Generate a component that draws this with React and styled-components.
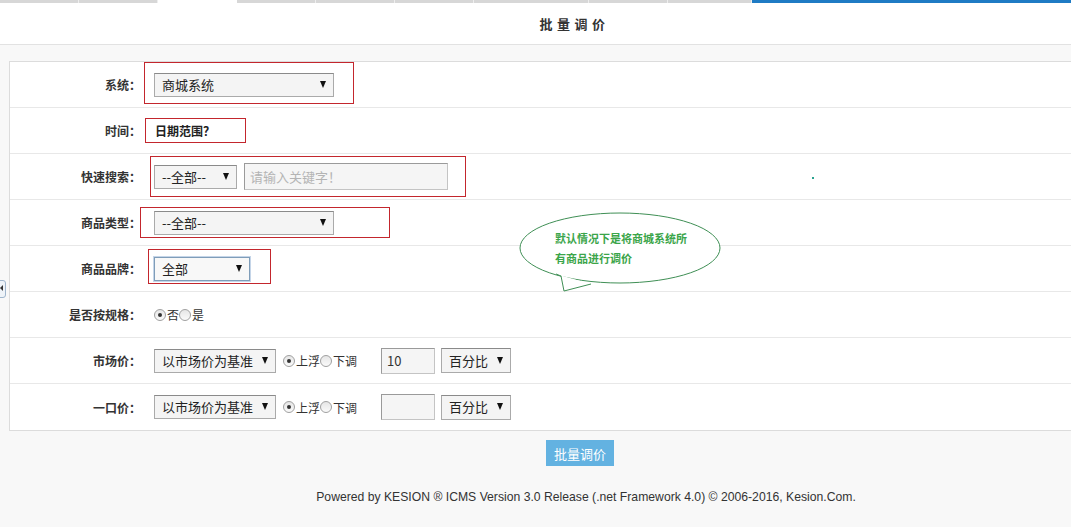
import React from "react";
import styled, { createGlobalStyle } from "styled-components";

const GlobalStyle = createGlobalStyle`
  body {
    margin: 0;
    background: #f8f8f8;
    font-family: "Noto Sans CJK SC", "Liberation Sans", sans-serif;
    font-size: 12px;
    color: #333;
  }
`;

const Page = styled.div`
  position: relative;
  width: 1071px;
  height: 527px;
  overflow: hidden;
`;

const TabStrip = styled.div`
  display: flex;
  height: 3px;
  background: #fff;
`;

const TabSeg = styled.div`
  box-sizing: border-box;
  width: ${(p) => (p.$w ? p.$w + "px" : "auto")};
  flex: ${(p) => (p.$w ? "none" : "1")};
  background: ${(p) => p.$bg};
  border-right: ${(p) => (p.$bg === "#d7d7d7" ? "1px solid #eee" : "none")};
`;

const Header = styled.div`
  height: 41px;
  background: #fff;
  border-bottom: 1px solid #e2e2e2;
  display: flex;
  align-items: center;
  justify-content: center;
  padding-left: 78px;
`;

const Title = styled.h1`
  margin: 0;
  font-size: 13px;
  font-weight: bold;
  letter-spacing: 4.5px;
  color: #333;
`;

const FormBox = styled.div`
  position: relative;
  margin: 16px 0 0 9px;
  width: 1075px;
  background: #fff;
  border: 1px solid #dcdcdc;
`;

const Row = styled.div`
  display: flex;
  align-items: center;
  height: ${(p) => p.$h || 45}px;
  border-bottom: ${(p) => (p.$last ? "none" : "1px solid #e8e8e8")};
`;

const Label = styled.div`
  width: 131px;
  text-align: right;
  font-weight: bold;
  font-size: 12px;
  color: #333;
  flex: none;
`;

const Value = styled.div`
  display: flex;
  align-items: center;
  padding-left: ${(p) => p.$pl || 0}px;
`;

const RedBox = styled.div`
  display: flex;
  align-items: center;
  gap: ${(p) => p.$gap || 0}px;
  border: 1px solid #c3262d;
  margin: ${(p) => p.$m || "0"};
  padding: ${(p) => p.$p || "0"};
  width: ${(p) => (p.$w ? p.$w + "px" : "auto")};
  height: ${(p) => (p.$h ? p.$h + "px" : "auto")};
  box-sizing: border-box;
`;

const Select = styled.div`
  display: flex;
  align-items: center;
  justify-content: space-between;
  box-sizing: border-box;
  width: ${(p) => p.$w}px;
  height: ${(p) => p.$h || 24}px;
  padding: 0 7px 1px 7px;
  border: 1px solid ${(p) => (p.$focus ? "#7f9db9" : "#aaa")};
  border-top-color: ${(p) => (p.$focus ? "#7f9db9" : "#8a8a8a")};
  background: ${(p) => (p.$focus ? "#f8f8f8" : "#f4f4f4")};
  box-shadow: ${(p) => (p.$focus ? "0 0 0 1px #c5d5e8" : "none")};
  font-size: 13px;
  line-height: 1;
  color: #222;
  margin-left: ${(p) => p.$ml || 0}px;
`;

const Arrow = styled.span`
  width: 0;
  height: 0;
  border-left: 3.5px solid transparent;
  border-right: 3.5px solid transparent;
  border-top: 7px solid #111;
`;

const TextInput = styled.div`
  box-sizing: border-box;
  width: ${(p) => p.$w}px;
  height: ${(p) => p.$h || 25}px;
  border: 1px solid #c4c4c4;
  border-top-color: #9a9a9a;
  border-left-color: #9a9a9a;
  background: #f5f5f5;
  display: flex;
  align-items: center;
  padding: 0 0 1px 5px;
  font-size: 13px;
  line-height: 1;
  color: ${(p) => (p.$ph ? "#b4b4b4" : "#333")};
  margin-left: ${(p) => p.$ml || 0}px;
`;

const DateText = styled.span`
  font-weight: bold;
  font-size: 12px;
  color: #222;
`;

const RadioGroup = styled.div`
  display: flex;
  align-items: center;
  margin-left: ${(p) => p.$ml || 0}px;
  font-size: 12px;
  color: #333;
`;

const Radio = styled.span`
  position: relative;
  width: 10px;
  height: 10px;
  border-radius: 50%;
  border: 1px solid #a0a0a0;
  background: linear-gradient(#e6e6e6, #fafafa);
  margin-right: 1px;
  &::after {
    content: "";
    display: ${(p) => (p.$on ? "block" : "none")};
    position: absolute;
    left: 3px;
    top: 3px;
    width: 4px;
    height: 4px;
    border-radius: 50%;
    background: #333;
  }
`;

const Bubble = styled.div`
  position: absolute;
  left: 508px;
  top: 148px;
  width: 206px;
  height: 84px;
`;

const BubbleText = styled.div`
  position: absolute;
  left: 37px;
  top: 18px;
  font-size: 11px;
  font-weight: bold;
  line-height: 20px;
  color: #3ba54a;
`;

const Dot = styled.span`
  position: absolute;
  left: 802px;
  top: 115px;
  width: 2px;
  height: 2px;
  background: #2aa38f;
`;

const SideHandle = styled.div`
  position: absolute;
  left: -3px;
  top: 280px;
  width: 7px;
  height: 16px;
  border: 1px solid #9fb5cc;
  border-radius: 3px;
  background: #eef3f8;
  &::after {
    content: "";
    position: absolute;
    left: 2px;
    top: 4px;
    border-top: 3px solid transparent;
    border-bottom: 3px solid transparent;
    border-right: 3px solid #333;
  }
`;

const ButtonBar = styled.div`
  display: flex;
  justify-content: center;
  padding: 9px 0 0 89px;
`;

const Button = styled.button`
  width: 68px;
  height: 26px;
  border: none;
  background: #63b2e1;
  color: #fff;
  font-family: "Noto Sans CJK SC", sans-serif;
  font-size: 13px;
  padding: 0;
`;

const Footer = styled.div`
  padding: 24px 0 0 101px;
  text-align: center;
  font-family: "Liberation Sans", Arial, sans-serif;
  font-size: 12.2px;
  color: #333;
`;

const tabs = [
  [79, "#d7d7d7"],
  [79, "#d7d7d7"],
  [79, "#fff"],
  [79, "#d7d7d7"],
  [79, "#d7d7d7"],
  [79, "#d7d7d7"],
  [115, "#d7d7d7"],
  [79, "#d7d7d7"],
  [84, "#d7d7d7"],
  [0, "#1f7bc4"],
];

const Radios = ({ items, ml }) => (
  <RadioGroup $ml={ml}>
    {items.map(([text, on]) => (
      <React.Fragment key={text}>
        <Radio $on={on} />
        {text}
      </React.Fragment>
    ))}
  </RadioGroup>
);

const PriceRow = ({ label, value, last }) => (
  <Row $last={last} $h={last ? 46 : 45}>
    <Label>{label}：</Label>
    <Value $pl={13}>
      <Select $w={122}>
        以市场价为基准 <Arrow />
      </Select>
      <Radios ml={7} items={[["上浮", true], ["下调", false]]} />
      <TextInput $w={54} $h={26} $ml={24}>{value}</TextInput>
      <Select $w={70} $ml={6} $h={25}>
        百分比 <Arrow />
      </Select>
    </Value>
  </Row>
);

export default function App() {
  return (
    <Page>
      <GlobalStyle />
      <TabStrip>
        {tabs.map(([w, bg], i) => (
          <TabSeg key={i} $w={w} $bg={bg} />
        ))}
      </TabStrip>
      <Header>
        <Title>批量调价</Title>
      </Header>

      <FormBox>
        <Row>
          <Label>系统：</Label>
          <RedBox $m="-3px 0 0 3px" $p="10px 19px 6px 9px">
            <Select $w={180}>
              商城系统 <Arrow />
            </Select>
          </RedBox>
        </Row>
        <Row>
          <Label>时间：</Label>
          <RedBox $m="0 0 0 4px" $p="0 0 1px 9px" $w={101} $h={25}>
            <DateText>日期范围？</DateText>
          </RedBox>
        </Row>
        <Row>
          <Label>快速搜索：</Label>
          <RedBox $m="0 0 0 9px" $p="6px 17px 6px 3px" $gap={7}>
            <Select $w={83}>
              --全部-- <Arrow />
            </Select>
            <TextInput $w={204} $h={27} $ph>请输入关键字！</TextInput>
          </RedBox>
        </Row>
        <Row>
          <Label>商品类型：</Label>
          <RedBox $m="0 0 0 -1px" $p="3px 55px 2px 13px">
            <Select $w={180}>
              --全部-- <Arrow />
            </Select>
          </RedBox>
        </Row>
        <Row>
          <Label>商品品牌：</Label>
          <RedBox $m="-5px 0 0 7px" $p="7px 20px 2px 5px">
            <Select $w={96} $focus>
              全部 <Arrow />
            </Select>
          </RedBox>
        </Row>
        <Row>
          <Label>是否按规格：</Label>
          <Radios ml={13} items={[["否", true], ["是", false]]} />
        </Row>
        <PriceRow label="市场价" value="10" />
        <PriceRow label="一口价" value="" last />

        <Bubble>
          <svg width="206" height="84" viewBox="0 0 206 84">
            <ellipse cx="102" cy="38" rx="100" ry="35" fill="#fff" stroke="#3f8f55" strokeWidth="1" />
            <polygon points="38,64 43,66 46,81 73,74" fill="#fff" />
            <polyline points="38,64 43,66 46,81 73,74" fill="none" stroke="#3f8f55" strokeWidth="1" />
          </svg>
          <BubbleText>
            默认情况下是将商城系统所
            <br />
            有商品进行调价
          </BubbleText>
        </Bubble>
        <Dot />
      </FormBox>

      <ButtonBar>
        <Button>批量调价</Button>
      </ButtonBar>
      <Footer>
        Powered by KESION ® ICMS Version 3.0 Release (.net Framework 4.0) © 2006-2016, Kesion.Com.
      </Footer>
      <SideHandle />
    </Page>
  );
}
